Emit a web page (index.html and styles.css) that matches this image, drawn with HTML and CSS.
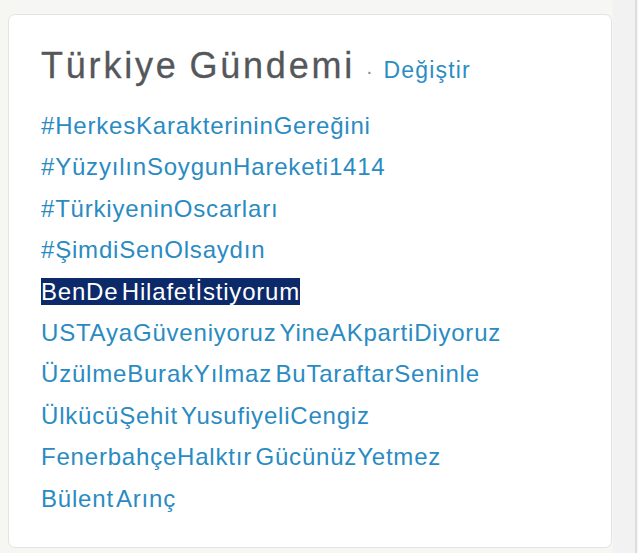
FILE: index.html
```html
<!DOCTYPE html>
<html lang="tr">
<head>
<meta charset="utf-8">
<link rel="stylesheet" href="styles.css">
</head>
<body>
<div class="page">
  <section class="card">
    <h2 class="title">Türkiye Gündemi <span class="dot">·</span> <a class="change">Değiştir</a></h2>
    <ul class="trends">
      <li><a>#HerkesKarakterininGereğini</a></li>
      <li><a>#YüzyılınSoygunHareketi1414</a></li>
      <li><a>#TürkiyeninOscarları</a></li>
      <li><a>#ŞimdiSenOlsaydın</a></li>
      <li><a class="selected">BenDe Hilafetİstiyorum</a></li>
      <li><a>USTAyaGüveniyoruz YineAKpartiDiyoruz</a></li>
      <li><a>ÜzülmeBurakYılmaz BuTaraftarSeninle</a></li>
      <li><a>ÜlkücüŞehit YusufiyeliCengiz</a></li>
      <li><a>FenerbahçeHalktır GücünüzYetmez</a></li>
      <li><a>Bülent Arınç</a></li>
    </ul>
  </section>
  <div class="rail"></div>
</div>
</body>
</html>
```
FILE: styles.css
```css
html, body {
  margin: 0;
  padding: 0;
  background: #f6f6f3;
  font-family: "Liberation Sans", Arial, sans-serif;
}
.page {
  display: flex;
  align-items: flex-start;
  height: 553px;
  overflow: hidden;
}
.card {
  margin: 14px 0 0 8px;
  width: 604px;
  height: 534px;
  box-sizing: border-box;
  background: #ffffff;
  border: 1px solid #e4e4e2;
  border-radius: 7px;
  padding: 30px 0 0 32px;
}
.title {
  margin: 0;
  font-weight: normal;
  font-size: 36px;
  line-height: 42px;
  letter-spacing: 2.8px;
  word-spacing: -2px;
  color: #55575a;
  -webkit-text-stroke: 0.3px #55575a;
}
.dot {
  font-size: 20px;
  letter-spacing: 0;
  color: #8a8a8a;
  -webkit-text-stroke: 0;
}
.change {
  font-size: 23px;
  letter-spacing: 1.2px;
  color: #2c8dc3;
  -webkit-text-stroke: 0;
}
.trends {
  list-style: none;
  margin: 13px 0 0;
  padding: 0;
}
.trends li {
  font-size: 24px;
  line-height: 41.4px;
  letter-spacing: 0.8px;
  word-spacing: -4px;
  color: #2a8bc2;
}
.trends a {
  color: #2a8bc2;
}
.trends a.selected {
  background: #0c2a6a;
  color: #ffffff;
}
.rail {
  margin-left: 1px;
  width: 22px;
  height: 553px;
  background: #f2f2f2;
  border-right: 2px solid #dededc;
}
```
